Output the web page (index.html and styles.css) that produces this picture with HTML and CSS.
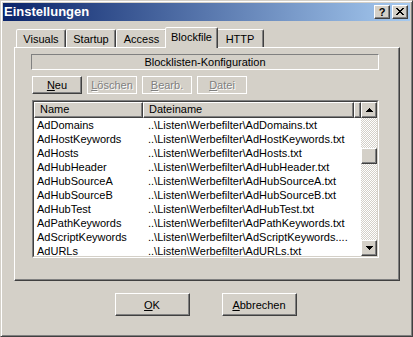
FILE: index.html
```html
<!DOCTYPE html>
<html lang="de">
<head>
<meta charset="utf-8">
<title>Einstellungen</title>
<link rel="stylesheet" href="styles.css">
</head>
<body>
<div class="window">
  <div class="titlebar">
    <span class="title">Einstellungen</span>
    <div class="caption-btns">
      <span class="cbtn help">?</span>
      <span class="cbtn close">
        <svg width="8" height="7" viewBox="0 0 8 7" shape-rendering="crispEdges">
          <rect x="0" y="0" width="2" height="1"/><rect x="6" y="0" width="2" height="1"/>
          <rect x="1" y="1" width="2" height="1"/><rect x="5" y="1" width="2" height="1"/>
          <rect x="2" y="2" width="4" height="1"/>
          <rect x="3" y="3" width="2" height="1"/>
          <rect x="2" y="4" width="4" height="1"/>
          <rect x="1" y="5" width="2" height="1"/><rect x="5" y="5" width="2" height="1"/>
          <rect x="0" y="6" width="2" height="1"/><rect x="6" y="6" width="2" height="1"/>
        </svg>
      </span>
    </div>
  </div>
  <div class="content">
    <div class="tabs">
      <div class="tab w50">Visuals</div>
      <div class="tab w50">Startup</div>
      <div class="tab w51">Access</div>
      <div class="tab w49 active">Blockfile</div>
      <div class="tab w48">HTTP</div>
    </div>
    <div class="panel">
      <div class="grouplabel">Blocklisten-Konfiguration</div>
      <div class="btnrow">
        <div class="btn raised"><u>N</u>eu</div>
        <div class="btn disabled"><u>L</u>öschen</div>
        <div class="btn disabled"><u>B</u>earb.</div>
        <div class="btn disabled"><u>D</u>atei</div>
      </div>
      <div class="listview">
        <div class="lv-inner">
          <div class="lv-main">
            <div class="lv-head">
              <div class="hcell hname">Name</div>
              <div class="hcell hfile">Dateiname</div>
              <div class="hcell hfill"></div>
            </div>
            <div class="lv-rows">
              <div class="row"><span class="cname">AdDomains</span><span class="cfile">..\Listen\Werbefilter\AdDomains.txt</span></div>
              <div class="row"><span class="cname">AdHostKeywords</span><span class="cfile">..\Listen\Werbefilter\AdHostKeywords.txt</span></div>
              <div class="row"><span class="cname">AdHosts</span><span class="cfile">..\Listen\Werbefilter\AdHosts.txt</span></div>
              <div class="row"><span class="cname">AdHubHeader</span><span class="cfile">..\Listen\Werbefilter\AdHubHeader.txt</span></div>
              <div class="row"><span class="cname">AdHubSourceA</span><span class="cfile">..\Listen\Werbefilter\AdHubSourceA.txt</span></div>
              <div class="row"><span class="cname">AdHubSourceB</span><span class="cfile">..\Listen\Werbefilter\AdHubSourceB.txt</span></div>
              <div class="row"><span class="cname">AdHubTest</span><span class="cfile">..\Listen\Werbefilter\AdHubTest.txt</span></div>
              <div class="row"><span class="cname">AdPathKeywords</span><span class="cfile">..\Listen\Werbefilter\AdPathKeywords.txt</span></div>
              <div class="row"><span class="cname">AdScriptKeywords</span><span class="cfile">..\Listen\Werbefilter\AdScriptKeywords....</span></div>
              <div class="row"><span class="cname">AdURLs</span><span class="cfile">..\Listen\Werbefilter\AdURLs.txt</span></div>
            </div>
          </div>
          <div class="scrollbar">
            <div class="sbtn raised">
              <svg width="7" height="4" viewBox="0 0 7 4" shape-rendering="crispEdges">
                <rect x="3" y="0" width="1" height="1"/><rect x="2" y="1" width="3" height="1"/>
                <rect x="1" y="2" width="5" height="1"/><rect x="0" y="3" width="7" height="1"/>
              </svg>
            </div>
            <div class="track"><div class="thumb raised"></div></div>
            <div class="sbtn raised">
              <svg width="7" height="4" viewBox="0 0 7 4" shape-rendering="crispEdges">
                <rect x="0" y="0" width="7" height="1"/><rect x="1" y="1" width="5" height="1"/>
                <rect x="2" y="2" width="3" height="1"/><rect x="3" y="3" width="1" height="1"/>
              </svg>
            </div>
          </div>
        </div>
      </div>
    </div>
    <div class="footer">
      <div class="fbtn raised"><u>O</u>K</div>
      <div class="fbtn raised"><u>A</u>bbrechen</div>
    </div>
  </div>
</div>
</body>
</html>
```

FILE: styles.css
```css
* { box-sizing: border-box; }
html, body { margin: 0; padding: 0; }
body {
  width: 413px;
  height: 337px;
  overflow: hidden;
  background: #d4d0c8;
  font-family: "Liberation Sans", Arial, sans-serif;
  font-size: 11px;
  color: #000;
}
u { text-decoration: underline; text-underline-offset: 1px; }

.window {
  width: 413px;
  height: 337px;
  background: #d4d0c8;
  border: 1px solid;
  border-color: #d4d0c8 #404040 #404040 #d4d0c8;
  box-shadow: inset 1px 1px #fff, inset -1px -1px #808080;
  padding: 2px;
  display: flex;
  flex-direction: column;
}

.titlebar {
  height: 18px;
  flex-shrink: 0;
  background: linear-gradient(to right, #0a246a, #a6caf0);
  display: flex;
  align-items: center;
  justify-content: space-between;
  padding: 0 2px 0 1px;
}
.title {
  color: #fff;
  font-weight: bold;
  font-size: 13px;
  line-height: 18px;
}
.caption-btns { display: flex; gap: 2px; }
.cbtn {
  width: 16px;
  height: 14px;
  background: #d4d0c8;
  border: 1px solid;
  border-color: #fff #404040 #404040 #fff;
  box-shadow: inset -1px -1px #808080;
  display: flex;
  align-items: center;
  justify-content: center;
}
.help { font-weight: bold; font-size: 11px; line-height: 12px; padding-bottom: 1px; }
.close svg { display: block; margin-bottom: 1px; }

.raised {
  background: #d4d0c8;
  border: 1px solid;
  border-color: #fff #404040 #404040 #fff;
  box-shadow: inset -1px -1px #808080;
}

.content {
  flex: 1;
  display: flex;
  flex-direction: column;
  padding: 6px 10px 0 11px;
}

.tabs {
  display: flex;
  align-items: flex-end;
  height: 20px;
  padding-left: 2px;
  position: relative;
  z-index: 1;
}
.tab {
  height: 18px;
  background: #d4d0c8;
  border: 1px solid;
  border-bottom: none;
  border-color: #fff #404040 transparent #fff;
  border-radius: 2px 2px 0 0;
  box-shadow: inset -1px 0 #808080;
  display: flex;
  align-items: center;
  justify-content: center;
  white-space: nowrap;
}
.w48 { width: 48px; }
.w49 { width: 49px; }
.w50 { width: 50px; }
.w51 { width: 51px; }
.tab.active {
  position: relative;
  z-index: 2;
  width: 53px;
  height: 21px;
  margin: 0 -2px -1px;
  padding-bottom: 2px;
}

.panel {
  height: 234px;
  flex-shrink: 0;
  border: 1px solid;
  border-color: #fff #404040 #404040 #fff;
  box-shadow: inset -1px -1px #808080;
  padding: 6px 20px 0 16px;
  display: flex;
  flex-direction: column;
}

.grouplabel {
  height: 16px;
  border: 1px solid;
  border-color: #808080 #fff #fff #808080;
  text-align: center;
  line-height: 14px;
}

.btnrow {
  display: flex;
  gap: 5px;
  margin: 6px 0 0 1px;
}
.btn {
  width: 50px;
  height: 18px;
  display: flex;
  align-items: center;
  justify-content: center;
  line-height: 14px;
}
.btn.disabled {
  border: 1px solid #fff;
  box-shadow: inset 1px 1px #d4d0c8;
  color: #808080;
  text-shadow: 1px 1px #fff;
}

.listview {
  margin: 6px 0 0 1px;
  height: 158px;
  border: 1px solid;
  border-color: #808080 #fff #fff #808080;
}
.lv-inner {
  height: 100%;
  border: 1px solid;
  border-color: #404040 #d4d0c8 #d4d0c8 #404040;
  background: #fff;
  display: flex;
}
.lv-main { flex: 1; overflow: hidden; }
.lv-head {
  display: flex;
  height: 16px;
  background: #d4d0c8;
}
.hcell {
  height: 16px;
  background: #d4d0c8;
  border: 1px solid;
  border-color: #fff #404040 #404040 #fff;
  box-shadow: inset -1px -1px #808080;
  padding-left: 5px;
  line-height: 13px;
  white-space: nowrap;
}
.hname { width: 109px; }
.hfile { width: 211px; }
.hfill { flex: 1; }

.row {
  display: flex;
  height: 14px;
  line-height: 14px;
  white-space: nowrap;
}
.cname { width: 109px; padding-left: 3px; flex-shrink: 0; }
.cfile { flex: 1; padding-left: 5px; overflow: hidden; }

.scrollbar {
  width: 16px;
  flex-shrink: 0;
  display: flex;
  flex-direction: column;
  background: repeating-conic-gradient(#fff 0 25%, #d4d0c8 0 50%) 0 0 / 2px 2px;
}
.sbtn {
  height: 16px;
  flex-shrink: 0;
  display: flex;
  align-items: center;
  justify-content: center;
}
.sbtn svg { display: block; }
.track { flex: 1; }
.thumb { height: 16px; margin-top: 30px; }

.footer {
  display: flex;
  justify-content: center;
  gap: 32px;
  margin-top: 12px;
  padding-right: 3px;
}
.fbtn {
  width: 75px;
  height: 23px;
  display: flex;
  align-items: center;
  justify-content: center;
}
```
